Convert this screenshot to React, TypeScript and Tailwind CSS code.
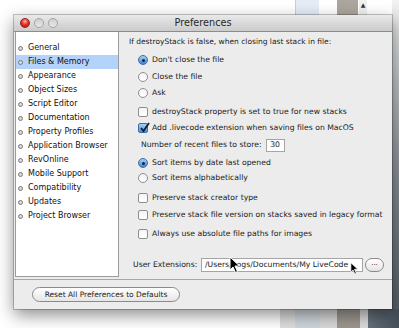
import React from 'react';

const font = { fontFamily: '"DejaVu Sans", "Liberation Sans", sans-serif' };

const sideItems = [
  'General',
  'Files & Memory',
  'Appearance',
  'Object Sizes',
  'Script Editor',
  'Documentation',
  'Property Profiles',
  'Application Browser',
  'RevOnline',
  'Mobile Support',
  'Compatibility',
  'Updates',
  'Project Browser',
];

function Radio({ on }: { on?: boolean }) {
  return on ? (
    <span className="w-[10px] h-[10px] rounded-full border border-[#3b6ea8] bg-gradient-to-b from-[#a9cdf3] to-[#3f86d6] flex items-center justify-center shrink-0">
      <span className="w-[3px] h-[3px] rounded-full bg-[#10243d]" />
    </span>
  ) : (
    <span className="w-[10px] h-[10px] rounded-full border border-[#8e8e8e] bg-gradient-to-b from-[#f4f4f4] to-[#ffffff] shrink-0" />
  );
}

function Check({ on }: { on?: boolean }) {
  return on ? (
    <span className="w-[10px] h-[10px] rounded-[2px] border border-[#3b6ea8] bg-gradient-to-b from-[#a9cdf3] to-[#4a8fdc] flex items-center justify-center shrink-0 relative">
      <svg width="11" height="11" viewBox="0 0 11 11" className="absolute -top-[2px] left-[0px]">
        <path d="M2 6 L4.5 9 L10 1" fill="none" stroke="#0e1d2e" strokeWidth="1.8" />
      </svg>
    </span>
  ) : (
    <span className="w-[10px] h-[10px] rounded-[2px] border border-[#8e8e8e] bg-gradient-to-b from-[#f4f4f4] to-[#ffffff] shrink-0" />
  );
}

function Cursor({ className }: { className: string }) {
  return (
    <svg className={className} width="12" height="18" viewBox="0 0 12 18">
      <path d="M1 1 L1 14 L4 11 L6.5 16.5 L8.5 15.5 L6 10 L10.5 10 Z" fill="#000" stroke="#fff" strokeWidth="1" />
    </svg>
  );
}

export default function App() {
  return (
    <div className="relative w-[399px] h-[328px] bg-white overflow-hidden" style={font}>
      {/* desktop bits behind the window */}
      <div className="absolute left-[295px] top-0 w-[24px] h-[15px] bg-[#e5ecf6] border-l border-[#c9ced6]" />
      <div className="absolute left-[337px] top-0 w-[21px] h-[15px] bg-[#aba59d]" />
      <div className="absolute left-[359px] top-0 w-[8px] h-[15px] bg-[#f0f0f0] text-[6px] leading-none text-[#333] flex justify-center pt-[2px]">▲</div>
      <div className="absolute left-[392px] top-0 w-[7px] h-[328px] bg-gradient-to-b from-[#f2f2f2] via-[#8b9298] to-[#4f5961]" />
      <div className="absolute left-[280px] top-[309px] w-[15px] h-[19px] bg-[#dedede]" />
      <div className="absolute left-[295px] top-[309px] w-[25px] h-[19px] bg-[#cfd6dc]" />
      <div className="absolute left-[320px] top-[309px] w-[17px] h-[19px] bg-[#d9d9d9]" />
      <div className="absolute left-[337px] top-[309px] w-[23px] h-[19px] bg-[#9d978f]" />
      <div className="absolute left-[360px] top-[309px] w-[8px] h-[19px] bg-[#dcdcdc]" />
      <div className="absolute left-[368px] top-[309px] w-[31px] h-[19px] bg-gradient-to-r from-[#65717b] to-[#45505a]" />

      {/* window */}
      <div className="absolute left-[14px] top-[15px] w-[378px] h-[294px] bg-[#ececec] flex flex-col shadow-[0_0_0_1px_rgba(0,0,0,0.22),0_6px_16px_rgba(0,0,0,0.45)]">
        <div className="h-[17px] shrink-0 relative flex items-center justify-center bg-gradient-to-b from-[#e9e9e9] to-[#cbcbcb] border-b border-[#8c8c8c]">
          <div className="absolute left-[6px] top-[3px] flex gap-[4px]">
            <span className="w-[10px] h-[10px] rounded-full border border-[#9a1d16] bg-[radial-gradient(circle_at_50%_30%,#ffb3a8_0%,#e8352a_45%,#a5140d_100%)]" />
            <span className="w-[10px] h-[10px] rounded-full border border-[#a3a3a3] bg-gradient-to-b from-[#cfcfcf] to-[#e8e8e8]" />
            <span className="w-[10px] h-[10px] rounded-full border border-[#a3a3a3] bg-gradient-to-b from-[#cfcfcf] to-[#e8e8e8]" />
          </div>
          <span className="text-[9.7px] text-[#262626] leading-none">Preferences</span>
        </div>

        <div className="h-[247px] shrink-0 flex">
          <div className="ml-[1px] mb-[2px] w-[104px] bg-white border-x border-b border-[#9c9c9c] pt-[9px]">
            {sideItems.map((s) => (
              <div
                key={s}
                className={`h-[14px] flex items-center pl-[2px] text-[8px] leading-none text-[#111] ${s === 'Files & Memory' ? 'bg-[#b4d3fb]' : ''}`}
              >
                <span className="w-[5px] h-[5px] rounded-full border border-[#7a7a7a] bg-[#d8d8d8] shrink-0" />
                <span className="ml-[5px] whitespace-nowrap">{s}</span>
              </div>
            ))}
          </div>

          <div className="flex-1 flex flex-col pt-[4px] text-[7.7px] leading-none text-[#1a1a1a]">
            <div className="h-[12px] flex items-center pl-[10px] whitespace-nowrap text-[7.5px]">If destroyStack is false, when closing last stack in file:</div>
            <div className="h-[12px] mt-[6px] flex items-center pl-[19px] gap-[4px] whitespace-nowrap"><Radio on />Don't close the file</div>
            <div className="h-[12px] mt-[5px] flex items-center pl-[19px] gap-[4px] whitespace-nowrap"><Radio />Close the file</div>
            <div className="h-[12px] mt-[4px] flex items-center pl-[19px] gap-[4px] whitespace-nowrap"><Radio />Ask</div>
            <div className="h-[12px] mt-[7px] flex items-center pl-[19px] gap-[4px] whitespace-nowrap"><Check />destroyStack property is set to true for new stacks</div>
            <div className="h-[12px] mt-[4px] flex items-center pl-[19px] gap-[4px] whitespace-nowrap"><Check on />Add .livecode extension when saving files on MacOS</div>
            <div className="h-[12px] mt-[5px] flex items-center pl-[22px] gap-[4px] whitespace-nowrap">
              Number of recent files to store:
              <span className="w-[19px] h-[13px] bg-white border border-[#a5a5a5] flex items-center justify-center">30</span>
            </div>
            <div className="h-[12px] mt-[6px] flex items-center pl-[19px] gap-[4px] whitespace-nowrap"><Radio on />Sort items by date last opened</div>
            <div className="h-[12px] mt-[3px] flex items-center pl-[19px] gap-[4px] whitespace-nowrap"><Radio />Sort items alphabetically</div>
            <div className="h-[12px] mt-[8px] flex items-center pl-[19px] gap-[4px] whitespace-nowrap"><Check />Preserve stack creator type</div>
            <div className="h-[12px] mt-[5px] flex items-center pl-[19px] gap-[4px] whitespace-nowrap"><Check />Preserve stack file version on stacks saved in legacy format</div>
            <div className="h-[12px] mt-[7px] flex items-center pl-[19px] gap-[4px] whitespace-nowrap"><Check />Always use absolute file paths for images</div>
            <div className="h-[12px] mt-[19px] flex items-center pl-[14px] whitespace-nowrap">
              <span className="w-[68px]">User Extensions:</span>
              <span className="w-[162px] h-[14px] bg-white border border-[#a5a5a5] flex items-center pl-[3px] overflow-hidden">/Users/bogs/Documents/My LiveCode</span>
              <span className="ml-[2px] w-[19px] h-[14px] rounded-full border border-[#8a8a8a] bg-gradient-to-b from-white to-[#e4e4e4] flex items-center justify-center text-[7px] pb-[3px]">...</span>
            </div>
          </div>
        </div>

        <div className="flex-1 border-t border-[#a8a8a8] flex items-center pl-[18px]">
          <button className="w-[148px] h-[15px] rounded-full border border-[#8a8a8a] bg-gradient-to-b from-white to-[#e6e6e6] text-[7.5px] leading-none text-[#1a1a1a] flex items-center justify-center">
            Reset All Preferences to Defaults
          </button>
        </div>
      </div>

      <Cursor className="absolute left-[229px] top-[256px]" />
      <Cursor className="absolute left-[350px] top-[262px] w-[9px] h-[13px]" />
    </div>
  );
}
